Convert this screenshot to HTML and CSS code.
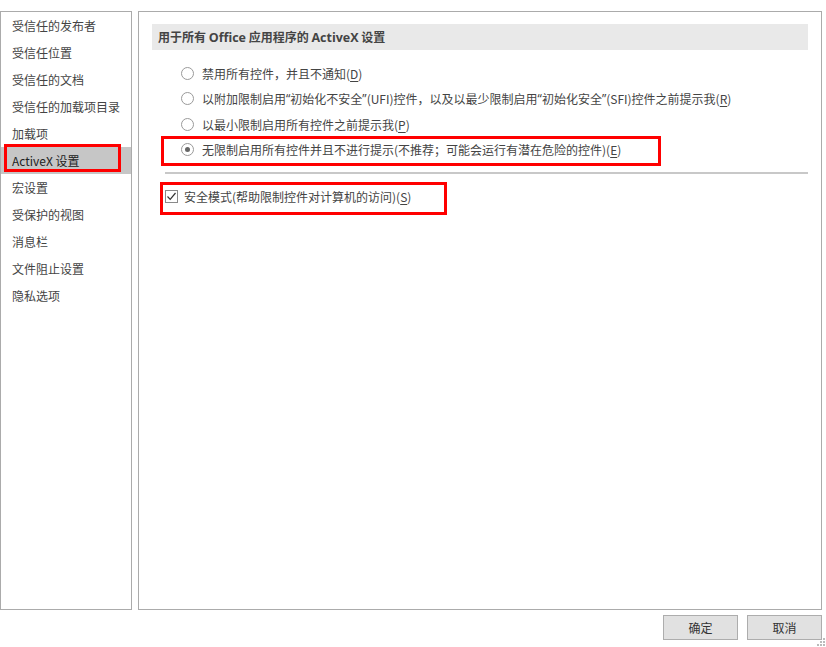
FILE: index.html
```html
<!DOCTYPE html>
<html lang="zh-CN">
<head>
<meta charset="utf-8">
<title>信任中心 - ActiveX 设置</title>
<link rel="stylesheet" href="styles.css">
</head>
<body>
<div class="dialog">
  <div class="main">
    <ul class="nav">
      <li>受信任的发布者</li>
      <li>受信任位置</li>
      <li>受信任的文档</li>
      <li>受信任的加载项目录</li>
      <li>加载项</li>
      <li class="active">ActiveX 设置<span class="mark mark-nav"></span></li>
      <li>宏设置</li>
      <li>受保护的视图</li>
      <li>消息栏</li>
      <li>文件阻止设置</li>
      <li>隐私选项</li>
    </ul>
    <section class="content">
      <h2 class="section-title">用于所有 <span class="latin">Office</span> 应用程序的 <span class="latin">ActiveX</span> 设置</h2>
      <div class="options">
        <label class="radio-row"><span class="radio"></span>禁用所有控件，并且不通知(<u>D</u>)</label>
        <label class="radio-row"><span class="radio"></span>以附加限制启用<span class="q">“</span>初始化不安全<span class="q">”</span>(UFI)控件，以及以最少限制启用<span class="q">“</span>初始化安全<span class="q">”</span>(SFI)控件之前提示我(<u>R</u>)</label>
        <label class="radio-row"><span class="radio"></span>以最小限制启用所有控件之前提示我(<u>P</u>)</label>
        <label class="radio-row"><span class="radio checked"></span>无限制启用所有控件并且不进行提示(不推荐；可能会运行有潜在危险的控件)(<u>E</u>)<span class="mark mark-radio"></span></label>
      </div>
      <div class="separator"></div>
      <label class="check-row"><span class="checkbox"><svg width="11" height="11" viewBox="0 0 11 11"><path d="M1.5 5.5 L4.2 8.3 L9.5 2" fill="none" stroke="#333" stroke-width="1.2"/></svg></span>安全模式(帮助限制控件对计算机的访问)(<u>S</u>)<span class="mark mark-check"></span></label>
    </section>
  </div>
  <div class="buttons">
    <button class="btn">确定</button>
    <button class="btn">取消</button>
  </div>
  <div class="grip">
    <svg width="8" height="8" viewBox="0 0 8 8"><rect x="6" y="0" width="2" height="2" fill="#bbb"/><rect x="3" y="3" width="2" height="2" fill="#bbb"/><rect x="6" y="3" width="2" height="2" fill="#bbb"/><rect x="0" y="6" width="2" height="2" fill="#bbb"/><rect x="3" y="6" width="2" height="2" fill="#bbb"/><rect x="6" y="6" width="2" height="2" fill="#bbb"/></svg>
  </div>
</div>
</body>
</html>
```
FILE: styles.css
```css
* { box-sizing: border-box; }
html, body {
  margin: 0;
  padding: 0;
  background: #fff;
}
body {
  font-family: "Noto Sans CJK SC", "Noto Sans", sans-serif;
  font-size: 12px;
  color: #444;
}
.dialog {
  position: relative;
  width: 826px;
  height: 647px;
  padding-top: 11px;
}
.main {
  display: flex;
  gap: 6px;
  height: 599px;
  width: 822px;
}
.nav {
  list-style: none;
  margin: 0;
  padding: 0;
  width: 132px;
  border: 1px solid #ababab;
  background: #fff;
}
.nav li {
  position: relative;
  height: 27px;
  line-height: 27px;
  padding-left: 11px;
  white-space: nowrap;
}
.nav li.active {
  background: #c6c6c6;
  color: #222;
}
.mark {
  position: absolute;
  border: 3px solid #ff0000;
  pointer-events: none;
}
.mark-nav {
  left: 3px;
  top: -3px;
  width: 117px;
  height: 28px;
}
.content {
  position: relative;
  flex: 1;
  border: 1px solid #ababab;
  padding: 12px 13px 0 13px;
}
.section-title {
  margin: 0;
  height: 26px;
  line-height: 25px;
  background: #e9e9e9;
  font-size: 12px;
  font-weight: bold;
  color: #444;
  padding-left: 6px;
}
.section-title .latin {
  font-family: "Open Sans", "Noto Sans", sans-serif;
  font-size: 12.5px;
}
.q {
  font-family: "Noto Sans", sans-serif;
}
.options {
  padding-top: 11px;
  display: flex;
  flex-direction: column;
}
.radio-row {
  position: relative;
  display: flex;
  align-items: center;
  height: 25.3px;
  padding-left: 29px;
  white-space: nowrap;
}
.radio {
  width: 13px;
  height: 13px;
  border: 1px solid #9a9a9a;
  border-radius: 50%;
  background: #fff;
  margin-right: 8px;
  flex: none;
  display: flex;
  align-items: center;
  justify-content: center;
}
.radio.checked::after {
  content: "";
  width: 5px;
  height: 5px;
  border-radius: 50%;
  background: #666;
}
.mark-radio {
  left: 9px;
  top: -1px;
  width: 500px;
  height: 30px;
}
u { text-decoration: underline; text-underline-offset: 2px; }
.separator {
  margin: 10px 0 0 13px;
  height: 2px;
  background: #c8c8c8;
}
.check-row {
  position: relative;
  display: flex;
  align-items: center;
  margin: 13px 0 0 13px;
  height: 18px;
  white-space: nowrap;
}
.checkbox {
  width: 13px;
  height: 13px;
  border: 1px solid #8a8a8a;
  background: #fff;
  margin-right: 6px;
  flex: none;
  display: flex;
  align-items: center;
  justify-content: center;
}
.mark-check {
  left: -5px;
  top: -5px;
  width: 287px;
  height: 33px;
}
.buttons {
  display: flex;
  justify-content: flex-end;
  gap: 9px;
  width: 822px;
  margin-top: 5px;
}
.btn {
  width: 75px;
  height: 25px;
  background: #e1e1e1;
  border: 1px solid #adadad;
  font-family: "Noto Sans CJK SC", sans-serif;
  font-size: 12px;
  color: #333;
  padding: 0;
}
.grip {
  position: absolute;
  right: 1px;
  bottom: 1px;
  line-height: 0;
}
```
